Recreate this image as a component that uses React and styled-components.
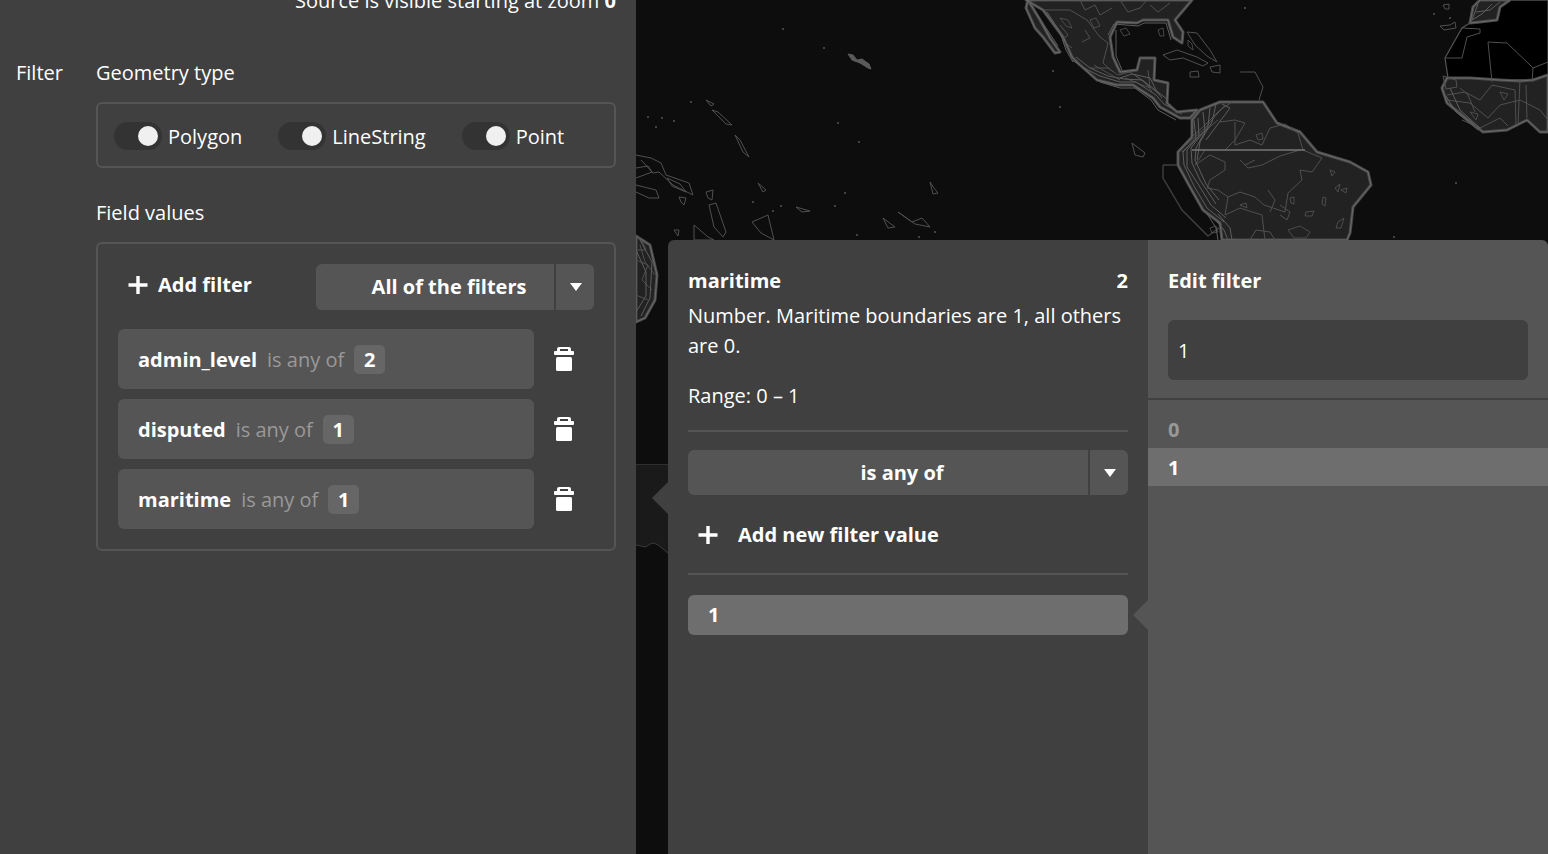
import React from 'react';
import styled, { createGlobalStyle } from 'styled-components';

const Global = createGlobalStyle`
  html, body {
    margin: 0;
    height: 100%;
    overflow: hidden;
    background: #0d0d0d;
  }
  body {
    font-family: "Open Sans", "Noto Sans", sans-serif;
    font-size: 20px;
    line-height: 30px;
    color: #fff;
  }
`;

const LAND = [
  'M1026 0 L1043 10 L1063 37 L1072 57 L1080 65 L1097 80 L1117 85 L1133 85 L1153 98 L1160 107 L1180 118 L1190 118 L1197 110 L1177 112 L1167 103 L1168 83 L1154 80 L1155 58 L1140 58 L1137 70 L1120 72 L1113 57 L1110 37 L1117 22 L1137 23 L1143 20 L1168 20 L1173 37 L1182 43 L1183 32 L1175 20 L1192 0 Z',
  'M1028 0 L1040 20 L1050 38 L1060 52 L1055 53 L1043 37 L1035 28 L1026 8 Z',
  'M1192 120 L1200 110 L1220 102 L1263 102 L1277 123 L1300 132 L1317 152 L1350 162 L1368 172 L1371 185 L1353 207 L1350 233 L1347 240 L1222 240 L1220 223 L1203 210 L1190 187 L1178 165 L1178 152 L1192 137 Z',
  'M1447 78 L1470 78 L1500 80 L1520 81 L1533 80 L1548 75 L1548 132 L1540 132 L1527 120 L1507 130 L1483 132 L1447 103 L1442 88 Z',
  'M1473 7 L1480 0 L1510 0 L1500 7 L1497 20 L1480 22 L1470 23 Z',
  'M636 236 L650 245 L657 275 L655 300 L645 318 L636 322 Z',
];

const SAHARA = 'M1445 58 L1462 28 L1470 23 L1480 22 L1497 20 L1500 7 L1510 0 L1548 0 L1548 75 L1533 80 L1500 80 L1470 78 L1448 78 Z';

// dense coast bands, the bright bundles along the west of the Americas
const COAST_BANDS = [
  'M1072 60 L1084 68 L1100 76 L1120 82 L1136 82 L1156 95 L1164 104 L1182 114',
  'M1076 57 L1090 68 L1108 76 L1124 79 L1142 80 L1158 92 L1168 100',
  'M1100 82 L1120 88 L1135 88 L1151 100 L1158 110 L1176 120',
  'M1120 78 L1132 74 L1150 78 L1156 90 L1162 98',
  'M1194 120 L1196 138 L1183 152 L1184 165 L1194 186 L1207 208 L1224 222',
  'M1198 118 L1199 136 L1187 150 L1187 167 L1198 184 L1211 205 L1226 218',
  'M1203 112 L1205 130 L1191 148 L1192 163 L1200 180 L1216 204',
  'M1210 108 L1208 126 L1196 148 L1195 160 L1206 184 L1219 200',
  'M1216 104 L1212 122 L1200 142 L1197 160',
  'M1222 104 L1230 108 L1218 124 L1206 140',
  'M1214 218 L1224 230 L1228 240 M1218 214 L1230 228 L1232 240 M1206 212 L1216 228 L1218 240',
  'M1047 12 L1060 32 L1066 50 L1073 62',
  'M1033 8 L1046 28 L1058 46',
  'M1450 88 L1460 110 L1480 128 M1446 96 L1456 112 L1478 130 M1448 104 L1470 122',
  'M1478 4 L1472 20 L1482 14 L1492 4 M1476 12 L1490 10 L1500 2',
  'M1108 35 L1114 24 L1138 26 L1144 23 L1166 23 L1171 40 M1116 30 L1116 56 L1122 70',
  'M640 240 L652 262 L650 298 L641 316 M636 250 L646 272 L646 296 L636 312',
];

const BORDERS = [
  'M1043 10 L1070 10 L1087 20 L1100 37 L1108 43 L1103 63 L1113 72',
  'M1060 25 L1068 35 L1062 40 L1072 48 M1085 30 L1090 38 L1082 42 M1120 0 L1128 12 L1140 8 L1147 0',
  'M1150 5 L1158 12 L1170 3 M1080 0 L1085 10 L1095 5 L1100 15 L1112 8',
  'M1090 68 L1108 68 L1118 75 L1130 72 L1145 82 L1152 92',
  'M1094 65 L1120 80 M1135 75 L1160 95 M1125 78 L1150 88 L1148 70',
  'M1192 137 L1205 125 L1220 110 L1232 102 M1186 145 L1205 128 L1225 105 M1182 152 L1200 135 L1218 120',
  'M1220 122 L1235 120 L1245 123 L1235 140 L1225 150 M1235 122 L1235 145 L1250 140 L1262 145 L1270 128 L1285 124 L1298 133 L1303 150',
  'M1205 150 L1195 165 L1210 155 L1225 162 L1225 170 L1210 180 L1207 188 L1218 190 L1228 197 L1240 192 L1255 197 L1264 205 L1285 212 L1288 193 L1302 180',
  'M1240 160 L1248 168 L1262 165 L1280 156 L1300 150 M1245 165 L1255 160',
  'M1228 197 L1225 215 L1240 208 L1262 215 L1265 240 M1250 240 L1256 230 L1270 232 L1275 240',
  'M1268 190 L1275 200 L1270 212 M1280 205 L1290 212 L1287 220 L1280 215',
  'M1303 150 L1322 158 L1312 172 L1300 170 L1302 180',
  'M1462 28 L1480 29 L1480 33 L1467 37 L1462 58 L1445 58',
  'M1488 42 L1492 82 M1488 42 L1507 43 L1530 65 L1533 68 L1548 62 M1533 68 L1532 82',
  'M1447 95 L1465 92 L1480 100 L1492 85 L1515 90 L1516 125 M1447 100 L1470 103 L1488 118 L1500 105 L1520 100 L1540 110 L1548 120',
  'M1462 120 L1480 128 L1500 118 L1508 126 M1460 88 L1468 95 L1475 112 M1520 80 L1518 125 M1526 85 L1527 118',
  'M636 260 L648 265 L642 280 L652 290 M636 295 L648 300 M640 245 L645 262 L655 275',
];

const LOOPS = [
  'M1256 135 L1262 133 L1263 139 L1258 140 Z', 'M1210 228 L1216 226 L1218 232 L1212 233 Z',
  'M1335 188 L1340 184 L1338 192 Z', 'M1341 190 L1347 188 L1346 193 Z', 'M1323 197 L1326 198 L1325 206 L1322 204 Z',
  'M1338 222 L1344 218 L1341 228 L1336 228 Z', 'M1306 212 L1314 211 L1312 216 L1305 216 Z',
  'M1290 198 L1294 197 L1294 204 L1291 203 Z', 'M1240 205 L1246 203 L1247 208 Z',
  'M1288 230 L1300 226 L1310 232 L1306 238 L1294 238 Z', 'M1330 170 L1335 172 L1332 176 Z',
  'M1120 30 L1126 28 L1130 34 L1124 36 Z', 'M1090 20 L1096 18 L1100 26 L1094 28 Z',
  'M1060 18 L1068 20 L1072 28 L1066 26 Z', 'M1158 30 L1163 28 L1164 36 L1160 36 Z',
  'M1188 40 L1192 44 L1193 50 L1188 46 Z', 'M1500 92 L1508 94 L1504 100 Z', 'M1470 112 L1478 114 L1476 120 Z',
];

const ISLANDS = [
  'M1132 143 L1145 153 L1143 157 L1135 155 Z',
  'M1163 55 L1177 50 L1197 57 L1208 63 L1203 66 L1183 58 L1170 60 Z',
  'M1210 67 L1220 65 L1220 73 L1212 72 Z',
  'M1190 72 L1198 71 L1199 77 L1190 77 Z',
  'M1187 32 L1197 33 L1210 50 L1217 62 L1207 56 L1195 45 Z',
  'M1240 72 L1255 72 L1263 87 L1259 100',
  'M636 155 L651 158 L661 163 L666 175 L689 183 L693 195 L673 185 L659 172 L653 173 L641 160',
  'M636 168 L648 166 L652 172 L636 178',
  'M667 178 L680 184 L686 192 L672 186 Z',
  'M636 185 L656 190 L659 198 L649 198 L636 192',
  'M706 192 L713 190 L712 200 L708 198 Z',
  'M709 205 L716 203 L726 232 L723 237 L714 227 Z',
  'M694 225 L708 237 L714 240 L694 240 Z',
  'M752 222 L768 215 L774 240 L761 233 Z',
  'M679 197 L686 198 L684 205 L681 202 Z',
  'M674 230 L679 230 L678 236 Z',
  'M636 235 L643 243 L646 250 L636 250',
  'M712 110 L718 112 L732 125 L726 124 Z',
  'M706 100 L714 104 L711 106 Z',
  'M735 135 L740 140 L749 157 L743 152 Z',
  'M930 182 L934 188 L938 193 L933 194 Z',
  'M796 207 L810 211 L802 212 Z',
  'M898 212 L912 222 L922 218 L930 227 L915 224 Z',
  'M883 218 L895 227 L888 228 Z',
  'M758 183 L766 190 L763 192 Z',
  'M1443 76 L1456 80 L1457 87 L1446 89 Z',
  'M1440 26 L1450 25 L1455 22 L1456 28 L1444 30 Z',
  'M1443 5 L1449 4 L1449 9 L1445 9 Z',
];

const DOTS = [
  [783, 29], [824, 48], [1053, 71], [1060, 107], [838, 123], [859, 142], [1245, 8], [1456, 183],
  [1394, 237], [691, 102], [648, 117], [662, 118], [674, 121], [656, 127], [845, 193], [753, 202],
  [781, 206], [773, 211], [835, 206], [935, 232], [857, 235], [919, 237], [1450, 18], [1434, 14],
];

function MapDrawing() {
  return (
    <MapSvg viewBox="636 0 912 854" aria-hidden="true">
      <rect x="636" y="0" width="912" height="854" fill="#0d0d0d" />
      <path d={SAHARA} fill="#000" stroke="#505050" strokeWidth="1.3" />
      {LAND.map((d) => (
        <path key={d} d={d} fill="#222" stroke="#4a4a4a" strokeWidth="3" strokeLinejoin="round" />
      ))}
      {LAND.map((d) => (
        <path key={d + 'x'} d={d} fill="none" stroke="#6a6a6a" strokeWidth="1" strokeLinejoin="round" />
      ))}
      <path d="M636 465 L668 465 L668 553 L658 545 L654 543 L650 544 L646 547 L636 545 Z" fill="#1a1a1a" />
      <path d="M636 464.5 L668 464.5" stroke="#2e2e2e" strokeWidth="1" />
      <path d="M636 545 L646 547 L650 544 L654 543 L658 545 L668 553" fill="none" stroke="#3a3a3a" strokeWidth="1" />
      <path d="M1163 165 L1177 165 M1163 165 L1163 178 L1182 210 L1208 236 L1220 227" fill="none" stroke="#3f3f3f" strokeWidth="1.4" />
      {BORDERS.map((d) => (
        <path key={d} d={d} fill="none" stroke="#505050" strokeWidth="1" strokeLinejoin="round" />
      ))}
      {COAST_BANDS.map((d) => (
        <path key={d} d={d} fill="none" stroke="#5e5e5e" strokeWidth="1" strokeLinejoin="round" />
      ))}
      {LOOPS.map((d) => (
        <path key={d} d={d} fill="none" stroke="#555" strokeWidth="0.8" />
      ))}
      {ISLANDS.map((d) => (
        <path key={d} d={d} fill="none" stroke="#505050" strokeWidth="1" strokeLinejoin="round" />
      ))}
      <path d="M848 54 L853 55 L857 60 L862 59 L869 64 L871 69 L868 68 L860 63 L852 60 Z" fill="#5a5a5a" stroke="#5a5a5a" strokeWidth="1" />
      {DOTS.map(([x, y]) => (
        <circle key={x + '-' + y} cx={x} cy={y} r="1" fill="#555" />
      ))}
      <path d="M1192 150 L1305 150" stroke="#777" strokeWidth="1.6" />
    </MapSvg>
  );
}

function TrashIcon() {
  return (
    <svg width="20" height="24" viewBox="0 0 20 24" fill="#fff" aria-hidden="true">
      <path d="M5 0 h10 a2 2 0 0 1 2 2 v2 h2 a1 1 0 0 1 1 1 v2 a1 1 0 0 1 -1 1 h-18 a1 1 0 0 1 -1 -1 v-2 a1 1 0 0 1 1 -1 h2 v-2 a2 2 0 0 1 2 -2 Z M6 2 v2 h8 v-2 Z" fillRule="evenodd" />
      <rect x="2" y="10" width="16" height="14" rx="1.5" />
    </svg>
  );
}

function PlusIcon() {
  return (
    <svg width="20" height="20" viewBox="0 0 20 20" aria-hidden="true">
      <path d="M10 1 V19 M0.5 10 H19.5" stroke="#fff" strokeWidth="3.4" />
    </svg>
  );
}

const FILTERS = [
  { name: 'admin_level', count: 2 },
  { name: 'disputed', count: 1 },
  { name: 'maritime', count: 1 },
];

function Dropdown({ label, height }) {
  return (
    <SelectBox $height={height}>
      <SelectLabel $height={height}>{label}</SelectLabel>
      <SelectCaret><span /></SelectCaret>
    </SelectBox>
  );
}

export default function App() {
  return (
    <Page>
      <Global />
      <Sidebar>
        <SourceNote>Source is visible starting at zoom <b>0</b></SourceNote>
        <FilterGrid>
          <span>Filter</span>
          <FilterBody>
            <span>Geometry type</span>
            <GeometryBox>
              {['Polygon', 'LineString', 'Point'].map((g) => (
                <ToggleItem key={g}>
                  <Toggle><Knob /></Toggle>
                  <ToggleLabel>{g}</ToggleLabel>
                </ToggleItem>
              ))}
            </GeometryBox>
            <FieldLabel>Field values</FieldLabel>
            <FieldBox>
              <FieldHeader>
                <AddFilter><PlusIcon />Add filter</AddFilter>
                <Dropdown label="All of the filters" height={46} />
              </FieldHeader>
              {FILTERS.map((f) => (
                <FilterRow key={f.name}>
                  <FilterPill>
                    <FilterName>{f.name}</FilterName>
                    <Muted>is any of</Muted>
                    <Badge>{f.count}</Badge>
                  </FilterPill>
                  <TrashCell><TrashIcon /></TrashCell>
                </FilterRow>
              ))}
            </FieldBox>
          </FilterBody>
        </FilterGrid>
      </Sidebar>
      <MapArea>
        <MapDrawing />
        <Panel>
          <FieldColumn>
            <FieldTitle><span>maritime</span><span>2</span></FieldTitle>
            <FieldDesc>Number. Maritime boundaries are 1, all others are 0.</FieldDesc>
            <FieldRange>Range: 0 – 1</FieldRange>
            <Rule />
            <Dropdown label="is any of" height={45} />
            <AddValue><PlusIcon />Add new filter value</AddValue>
            <Rule />
            <ValueRow>1</ValueRow>
          </FieldColumn>
          <EditColumn>
            <EditHead>
              <b>Edit filter</b>
              <EditInput>1</EditInput>
            </EditHead>
            <OptionRow>0</OptionRow>
            <OptionRow $active>1</OptionRow>
          </EditColumn>
        </Panel>
      </MapArea>
    </Page>
  );
}

const Page = styled.div`
  display: flex;
  width: 1548px;
  height: 854px;
  overflow: hidden;
`;
const Sidebar = styled.aside`
  width: 636px;
  flex: none;
  box-sizing: border-box;
  padding: 0 20px 0 16px;
  background: #404040;
`;
const SourceNote = styled.div`
  margin-top: -14px;
  text-align: right;
  b { font-weight: 700; }
`;
const FilterGrid = styled.div`
  display: grid;
  grid-template-columns: 80px 520px;
  margin-top: 42px;
`;
const FilterBody = styled.div`
  display: flex;
  flex-direction: column;
`;
const GeometryBox = styled.div`
  display: flex;
  align-items: center;
  gap: 36px;
  box-sizing: border-box;
  height: 66px;
  margin-top: 14px;
  padding: 2px 0 0 16px;
  border: 2px solid #555;
  border-radius: 6px;
`;
const ToggleItem = styled.div`
  display: flex;
  align-items: center;
  gap: 6px;
`;
const ToggleLabel = styled.span`
  padding-top: 2px;
`;
const Toggle = styled.div`
  display: flex;
  align-items: center;
  justify-content: flex-end;
  box-sizing: border-box;
  width: 48px;
  height: 28px;
  padding-right: 4px;
  border-radius: 14px;
  background: #333;
`;
const Knob = styled.div`
  width: 20px;
  height: 20px;
  border-radius: 50%;
  background: #f0f0f0;
`;
const FieldLabel = styled.span`
  margin-top: 30px;
`;
const FieldBox = styled.div`
  display: flex;
  flex-direction: column;
  gap: 10px;
  box-sizing: border-box;
  margin-top: 14px;
  padding: 20px;
  border: 2px solid #555;
  border-radius: 6px;
`;
const FieldHeader = styled.div`
  display: flex;
  align-items: center;
  justify-content: space-between;
  margin-bottom: 9px;
  padding-left: 10px;
  > div:last-child { width: 278px; flex: none; }
`;
const AddFilter = styled.div`
  display: flex;
  align-items: center;
  gap: 10px;
  margin-bottom: 4px;
  font-weight: 700;
`;
const SelectBox = styled.div`
  display: flex;
  flex: none;
  height: ${(p) => p.$height}px;
  border-radius: 6px;
  overflow: hidden;
  font-weight: 700;
`;
const SelectLabel = styled.div`
  flex: 1;
  box-sizing: border-box;
  padding-left: 28px;
  text-align: center;
  line-height: ${(p) => p.$height}px;
  background: #555;
`;
const SelectCaret = styled.div`
  display: flex;
  align-items: center;
  justify-content: center;
  width: 38px;
  margin-left: 2px;
  padding-left: 2px;
  box-sizing: border-box;
  background: #555;
  span {
    border-left: 6px solid transparent;
    border-right: 6px solid transparent;
    border-top: 8px solid #fff;
  }
`;
const FilterRow = styled.div`
  display: flex;
`;
const FilterPill = styled.div`
  display: flex;
  align-items: center;
  gap: 10px;
  width: 416px;
  height: 60px;
  box-sizing: border-box;
  padding-left: 20px;
  border-radius: 6px;
  background: #555;
`;
const FilterName = styled.b`
  padding-top: 2px;
  font-weight: 700;
`;
const Muted = styled.span`
  padding-top: 2px;
  color: #999;
`;
const Badge = styled.span`
  width: 31px;
  height: 29px;
  line-height: 29px;
  text-align: center;
  border-radius: 5px;
  font-weight: 700;
  background: #666;
`;
const TrashCell = styled.div`
  display: flex;
  align-items: center;
  justify-content: center;
  width: 60px;
`;
const MapArea = styled.main`
  position: relative;
  flex: 1;
  background: #0d0d0d;
`;
const MapSvg = styled.svg`
  display: block;
  width: 912px;
  height: 854px;
  filter: blur(0.35px);
`;
const Panel = styled.section`
  position: absolute;
  left: 32px;
  top: 240px;
  display: flex;
  width: 880px;
  height: 614px;
`;
const FieldColumn = styled.div`
  position: relative;
  display: flex;
  flex-direction: column;
  width: 480px;
  box-sizing: border-box;
  padding: 26px 20px 0;
  border-top-left-radius: 6px;
  background: #404040;
  &::before {
    content: '';
    position: absolute;
    left: -16px;
    top: 242px;
    border-top: 16px solid transparent;
    border-bottom: 16px solid transparent;
    border-right: 16px solid #404040;
  }
`;
const FieldTitle = styled.div`
  display: flex;
  justify-content: space-between;
  font-weight: 700;
`;
const FieldDesc = styled.div`
  margin-top: 5px;
`;
const FieldRange = styled.div`
  margin-top: 20px;
`;
const Rule = styled.div`
  height: 2px;
  flex: none;
  margin: 19px 0 18px;
  background: #555;
  & ~ & {
    margin-top: 20px;
  }
`;
const AddValue = styled.div`
  display: flex;
  align-items: center;
  gap: 20px;
  box-sizing: border-box;
  height: 76px;
  margin-bottom: -18px;
  padding: 4px 0 0 10px;
  font-weight: 700;
`;
const ValueRow = styled.div`
  position: relative;
  flex: none;
  height: 40px;
  margin-top: 2px;
  padding-left: 20px;
  line-height: 40px;
  border-radius: 6px;
  font-weight: 700;
  background: #6e6e6e;
  &::after {
    content: '';
    position: absolute;
    right: -20px;
    top: 5px;
    border-top: 15px solid transparent;
    border-bottom: 15px solid transparent;
    border-right: 15px solid #555;
  }
`;
const EditColumn = styled.div`
  flex: 1;
  border-top-right-radius: 6px;
  background: #555;
`;
const EditHead = styled.div`
  box-sizing: border-box;
  height: 160px;
  padding: 26px 20px 0;
  margin-bottom: 10px;
  border-bottom: 2px solid #404040;
  b { font-weight: 700; }
`;
const EditInput = styled.div`
  height: 60px;
  margin-top: 24px;
  padding-left: 10px;
  line-height: 62px;
  border-radius: 6px;
  background: #404040;
`;
const OptionRow = styled.div`
  height: 38px;
  padding-left: 20px;
  line-height: 40px;
  font-weight: 700;
  color: ${(p) => (p.$active ? '#fff' : '#999')};
  background: ${(p) => (p.$active ? '#6e6e6e' : 'transparent')};
`;
